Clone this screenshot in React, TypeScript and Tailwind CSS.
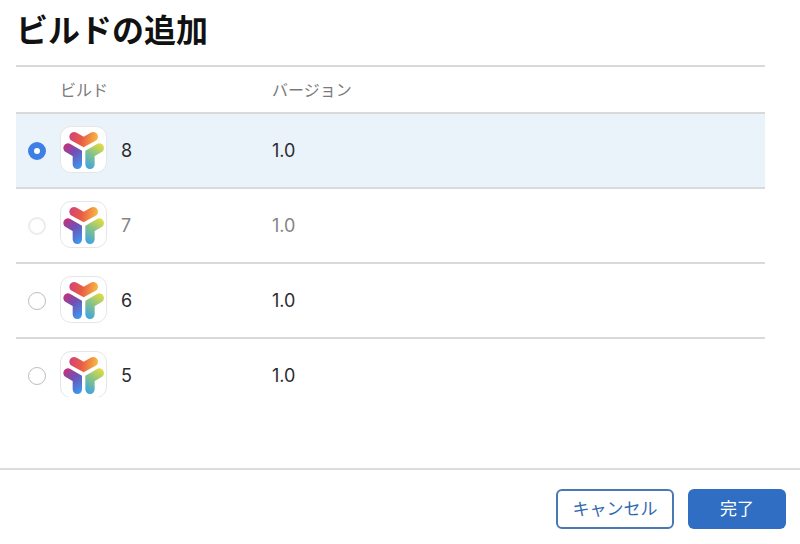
import { useState } from "react";

interface Build {
    number: string;
    version: string;
    disabled?: boolean;
}

const builds: Build[] = [
    { number: "8", version: "1.0" },
    { number: "7", version: "1.0", disabled: true },
    { number: "6", version: "1.0" },
    { number: "5", version: "1.0" },
];

function AppIcon() {
    return (
        <svg viewBox="0 0 141 141" className="mb-0.5 size-[47px] shrink-0" aria-hidden="true">
            <defs>
                <linearGradient id="icon-top" gradientUnits="userSpaceOnUse" x1="30" y1="20" x2="112" y2="32">
                    <stop offset="0" stopColor="#d2437a" />
                    <stop offset="0.45" stopColor="#e95b45" />
                    <stop offset="1" stopColor="#f6b740" />
                </linearGradient>
                <linearGradient id="icon-left" gradientUnits="userSpaceOnUse" x1="12" y1="58" x2="58" y2="122">
                    <stop offset="0" stopColor="#c4317c" />
                    <stop offset="0.45" stopColor="#7050b4" />
                    <stop offset="1" stopColor="#3f93ec" />
                </linearGradient>
                <linearGradient id="icon-right" gradientUnits="userSpaceOnUse" x1="128" y1="56" x2="84" y2="124">
                    <stop offset="0" stopColor="#e5dc3e" />
                    <stop offset="0.5" stopColor="#86c388" />
                    <stop offset="1" stopColor="#42a5dd" />
                </linearGradient>
            </defs>
            <rect x="1.5" y="1.5" width="138" height="138" rx="31" fill="#fff" stroke="#e4e6e8" strokeWidth="3" />
            <g fill="none" strokeWidth="28" strokeLinecap="round" strokeLinejoin="miter">
                <path d="M42 32 L71 48 L100 32" stroke="url(#icon-top)" />
                <path d="M24 66 L52 82 L52 115" stroke="url(#icon-left)" />
                <path d="M118 66 L90 82 L90 115" stroke="url(#icon-right)" />
            </g>
        </svg>
    );
}

export default function App() {
    const [selected, setSelected] = useState("8");

    return (
        <div className="bg-white font-[Inter,'Noto_Sans_CJK_JP',sans-serif] text-[#2c2c2e]">
            <main className="h-[397px] overflow-hidden pr-[35px] pl-4">
                <h1 className="h-[65px] pt-2 text-[32px] leading-[46px] font-bold text-[#111]">ビルドの追加</h1>

                <table className="w-full table-fixed border-collapse text-left">
                    <thead>
                        <tr className="h-[47px] border-y-2 border-[#d9d9d9] text-base text-[#7a7a7d]">
                            <th className="w-[44px]" aria-label="選択" />
                            <th className="w-[212px] font-normal">ビルド</th>
                            <th className="font-normal">バージョン</th>
                        </tr>
                    </thead>
                    <tbody>
                        {builds.map((build) => {
                            const isSelected = build.number === selected;
                            return (
                                <tr
                                    key={build.number}
                                    className={`h-[75px] border-b-2 border-[#d9d9d9] text-lg ${
                                        isSelected ? "bg-[#ebf3fa]" : ""
                                    } ${build.disabled ? "text-[#858587]" : ""}`}
                                >
                                    <td className="pl-3">
                                        <input
                                            type="radio"
                                            name="build"
                                            id={`build-${build.number}`}
                                            checked={isSelected}
                                            disabled={build.disabled}
                                            onChange={() => setSelected(build.number)}
                                            className="block size-[18px] appearance-none rounded-full border border-[#bdbdbd] bg-white checked:border-[6px] checked:border-[#3d7fe6] disabled:border-2 disabled:border-[#ececec]"
                                        />
                                    </td>
                                    <td>
                                        <label htmlFor={`build-${build.number}`} className="flex items-center gap-[14px]">
                                            <AppIcon />
                                            {build.number}
                                        </label>
                                    </td>
                                    <td>{build.version}</td>
                                </tr>
                            );
                        })}
                    </tbody>
                </table>
            </main>

            <footer className="mt-[71px] flex justify-end gap-[14px] border-t-2 border-[#dcdcdc] pt-[19px] pr-[14px] pb-4 text-[17px]">
                <button
                    type="button"
                    className="h-10 w-[118px] rounded-md border-2 border-[#4a78b3] bg-white pt-0.5 text-[#2f68b0]"
                >
                    キャンセル
                </button>
                <button type="button" className="h-10 w-[98px] rounded-md bg-[#2f6ec3] pt-0.5 text-white">
                    完了
                </button>
            </footer>
        </div>
    );
}
